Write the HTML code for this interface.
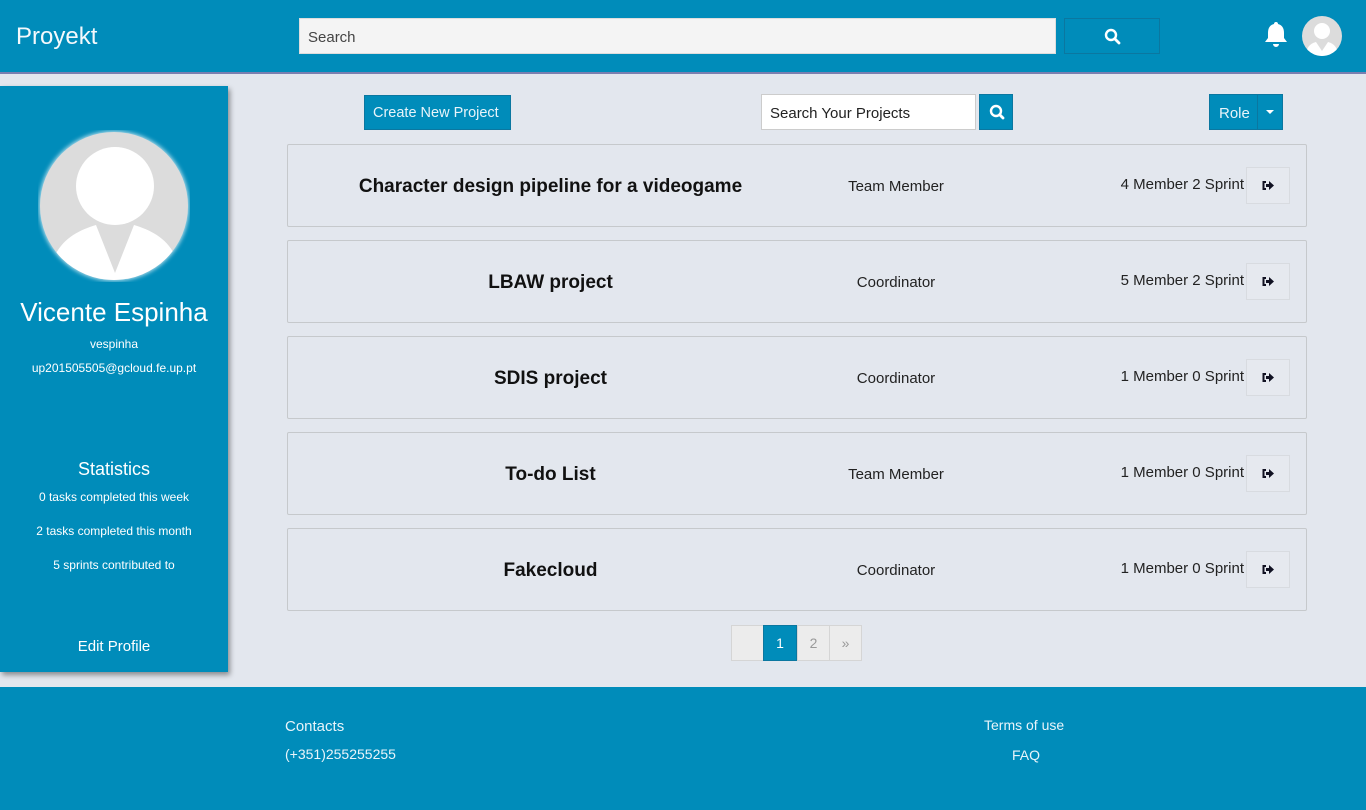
<!DOCTYPE html>
<html><head><meta charset="utf-8"><style>
*{box-sizing:border-box;margin:0;padding:0}
body{width:1366px;height:810px;background:#e3e7ee;font-family:"Liberation Sans",sans-serif;position:relative;overflow:hidden}
.hdr{position:absolute;left:0;top:0;width:1366px;height:74px;background:#008cba;border-bottom:2px solid #7a7fb0}
.logo{position:absolute;left:16px;top:23px;color:#f4f9fc;font-size:24px}
.search{position:absolute;left:299px;top:18px;width:757px;height:36px;background:#f4f4f4;border:1px solid #ddd;font-size:15px;color:#444;padding:10px 8px}
.sbtn{position:absolute;left:1064px;top:18px;width:96px;height:36px;border:1px solid #0b77a0;background:#008cba}
.side{position:absolute;left:0;top:86px;width:228px;height:586px;background:#008cba;box-shadow:2px 3px 5px rgba(0,0,0,.4);color:#fff;text-align:center}
.btn{position:absolute;background:#008cba;border:1px solid #0b77a0;color:#e8f4fa;font-size:15px}
.card{position:absolute;left:287px;width:1020px;height:83px;border:1px solid #c6c9cc;border-radius:2px;background:#e3e7ee}
.card .t{position:absolute;left:0;width:525px;text-align:center;top:31px;font-size:19px;font-weight:bold;color:#111}
.card .r{position:absolute;left:540px;width:136px;text-align:center;top:33px;font-size:15px;color:#222}
.card .m{position:absolute;right:62px;top:31px;font-size:15px;color:#222}
.card .g{position:absolute;right:16px;top:22px;width:44px;height:37px;border:1px solid #d8dbe0;background:#e6e9ef}
.pg{position:absolute;top:625px;height:36px;border:1px solid #d5d5d5;background:#ececec;color:#999;font-size:14px;text-align:center;line-height:34px}
.foot{position:absolute;left:0;top:687px;width:1366px;height:123px;background:#008cba;color:#e8f4fa;font-size:14px}
</style></head><body>
<div class="hdr">
<div class="logo">Proyekt</div>
<div class="search">Search</div>
<div class="sbtn"><svg width="96" height="36"><circle cx="46" cy="16" r="5" fill="none" stroke="#fff" stroke-width="2.4"/><line x1="50" y1="20" x2="54" y2="24" stroke="#fff" stroke-width="2.8" stroke-linecap="round"/></svg></div>
<svg style="position:absolute;left:1262px;top:20px" width="28" height="30"><path d="M14 2c1.5 0 2 1 2 2 4 1 6 4 6 9v5l3 4H3l3-4v-5c0-5 2-8 6-9 0-1 .5-2 2-2z M11 24h6a3 3 0 0 1-6 0z" fill="#fff"/></svg>
<svg style="position:absolute;left:1302px;top:16px" width="40" height="40"><defs><clipPath id="c1"><circle cx="20" cy="20" r="20"/></clipPath></defs><circle cx="20" cy="20" r="20" fill="#dcdcdc"/><g clip-path="url(#c1)"><circle cx="20" cy="15" r="8" fill="#fff"/><path d="M4 40c0-10 6-13 10-14l6 9 6-9c4 1 10 4 10 14z" fill="#fff"/></g></svg>
</div>
<div class="side">
<svg style="position:absolute;left:38px;top:44px" width="152" height="152"><defs><clipPath id="c2"><circle cx="76" cy="76" r="74"/></clipPath><filter id="gl"><feGaussianBlur stdDeviation="2"/></filter></defs><circle cx="76" cy="76" r="75" fill="#bfe3f0" filter="url(#gl)"/><circle cx="76" cy="76" r="74" fill="#dcdcdc"/><g clip-path="url(#c2)"><circle cx="77" cy="56" r="39" fill="#fff"/><path d="M10 160c0-45 25-58 48-65l19 48 19-48c23 7 48 20 48 65z" fill="#fff"/></g></svg>
<div style="position:absolute;top:211px;width:100%;font-size:26px">Vicente Espinha</div>
<div style="position:absolute;top:251px;width:100%;font-size:12px">vespinha</div>
<div style="position:absolute;top:275px;width:100%;font-size:12px">up201505505@gcloud.fe.up.pt</div>
<div style="position:absolute;top:373px;width:100%;font-size:18px">Statistics</div>
<div style="position:absolute;top:404px;width:100%;font-size:12px">0 tasks completed this week</div>
<div style="position:absolute;top:438px;width:100%;font-size:12px">2 tasks completed this month</div>
<div style="position:absolute;top:472px;width:100%;font-size:12px">5 sprints contributed to</div>
<div style="position:absolute;top:552px;width:100%;font-size:15px">Edit Profile</div>
</div>
<div class="btn" style="left:364px;top:95px;width:147px;height:35px;padding:9px 0 0 8px;font-size:14.5px">Create New Project</div>
<div style="position:absolute;left:761px;top:94px;width:215px;height:36px;background:#fff;border:1px solid #ccc;font-size:15px;color:#222;padding:10px 8px">Search Your Projects</div>
<div class="btn" style="left:979px;top:94px;width:34px;height:36px"><svg width="34" height="36"><circle cx="16" cy="16" r="5" fill="none" stroke="#fff" stroke-width="2.4"/><line x1="20" y1="20" x2="23" y2="23" stroke="#fff" stroke-width="2.8" stroke-linecap="round"/></svg></div>
<div class="btn" style="left:1209px;top:94px;width:74px;height:36px"><span style="position:absolute;left:9px;top:10px">Role</span><div style="position:absolute;left:47px;top:0;width:1px;height:34px;background:#0b77a0"></div><div style="position:absolute;left:56px;top:15px;border:4px solid transparent;border-top:4px solid #fff;border-bottom:0"></div></div>

<div class="card" style="top:144px"><div class="t">Character design pipeline for a videogame</div><div class="r">Team Member</div><div class="m">4 Member 2 Sprint</div><div class="g"><svg width="42" height="35"><path d="M19 14h-2.5v7H19" fill="none" stroke="#112" stroke-width="2"/><path d="M19 16h3v-3l5 4.5-5 4.5v-3h-3z" fill="#112"/></svg></div></div>
<div class="card" style="top:240px"><div class="t">LBAW project</div><div class="r">Coordinator</div><div class="m">5 Member 2 Sprint</div><div class="g"><svg width="42" height="35"><path d="M19 14h-2.5v7H19" fill="none" stroke="#112" stroke-width="2"/><path d="M19 16h3v-3l5 4.5-5 4.5v-3h-3z" fill="#112"/></svg></div></div>
<div class="card" style="top:336px"><div class="t">SDIS project</div><div class="r">Coordinator</div><div class="m">1 Member 0 Sprint</div><div class="g"><svg width="42" height="35"><path d="M19 14h-2.5v7H19" fill="none" stroke="#112" stroke-width="2"/><path d="M19 16h3v-3l5 4.5-5 4.5v-3h-3z" fill="#112"/></svg></div></div>
<div class="card" style="top:432px"><div class="t">To-do List</div><div class="r">Team Member</div><div class="m">1 Member 0 Sprint</div><div class="g"><svg width="42" height="35"><path d="M19 14h-2.5v7H19" fill="none" stroke="#112" stroke-width="2"/><path d="M19 16h3v-3l5 4.5-5 4.5v-3h-3z" fill="#112"/></svg></div></div>
<div class="card" style="top:528px"><div class="t">Fakecloud</div><div class="r">Coordinator</div><div class="m">1 Member 0 Sprint</div><div class="g"><svg width="42" height="35"><path d="M19 14h-2.5v7H19" fill="none" stroke="#112" stroke-width="2"/><path d="M19 16h3v-3l5 4.5-5 4.5v-3h-3z" fill="#112"/></svg></div></div>

<div class="pg" style="left:731px;width:33px"></div>
<div class="pg" style="left:763px;width:34px;background:#008cba;border-color:#0b77a0;color:#fff">1</div>
<div class="pg" style="left:797px;width:33px">2</div>
<div class="pg" style="left:829px;width:33px">»</div>

<div class="foot">
<div style="position:absolute;left:285px;top:31px;font-size:15px">Contacts</div>
<div style="position:absolute;left:285px;top:59px">(+351)255255255</div>
<div style="position:absolute;left:984px;top:30px">Terms of use</div>
<div style="position:absolute;left:1012px;top:60px">FAQ</div>
</div>
</body></html>
